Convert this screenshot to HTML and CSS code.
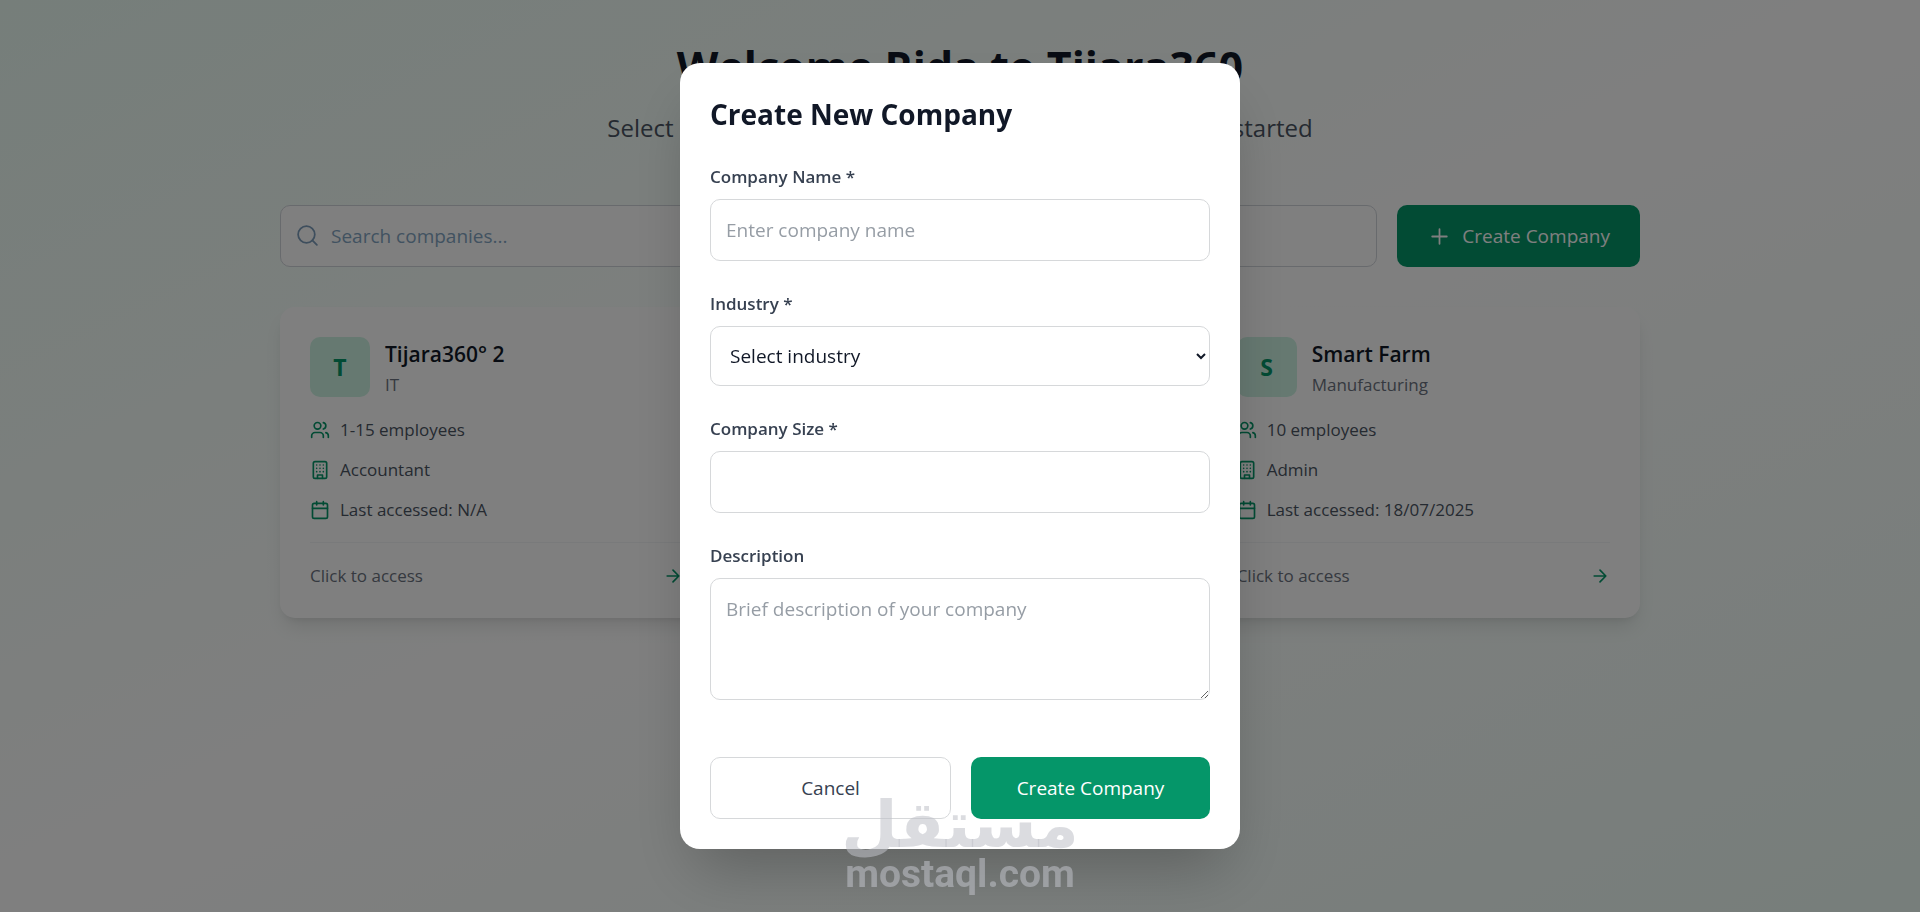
FILE: index.html
```html
<!DOCTYPE html>
<html lang="en">
<head>
<meta charset="utf-8">
<meta name="viewport" content="width=device-width, initial-scale=1">
<title>Tijara360</title>
<link rel="stylesheet" href="styles.css">
</head>
<body>
<svg class="sprite" aria-hidden="true">
  <symbol id="users" viewBox="0 0 24 24"><path d="M16 21v-2a4 4 0 0 0-4-4H6a4 4 0 0 0-4 4v2"/><circle cx="9" cy="7" r="4"/><path d="M22 21v-2a4 4 0 0 0-3-3.87"/><path d="M16 3.13a4 4 0 0 1 0 7.75"/></symbol>
  <symbol id="building" viewBox="0 0 24 24"><rect x="4" y="2" width="16" height="20" rx="2"/><path d="M9 22v-4h6v4M8 6h.01M16 6h.01M12 6h.01M12 10h.01M12 14h.01M16 10h.01M16 14h.01M8 10h.01M8 14h.01"/></symbol>
  <symbol id="calendar" viewBox="0 0 24 24"><path d="M8 2v4M16 2v4"/><rect x="3" y="4" width="18" height="18" rx="2"/><path d="M3 10h18"/></symbol>
  <symbol id="arrow" viewBox="0 0 24 24"><path d="M5 12h14M12 5l7 7-7 7"/></symbol>
  <symbol id="search" viewBox="0 0 24 24"><circle cx="11" cy="11" r="8"/><path d="m21 21-4.3-4.3"/></symbol>
  <symbol id="plus" viewBox="0 0 24 24"><path d="M5 12h14M12 5v14"/></symbol>
</svg>

<main class="page">
  <header class="intro">
    <h1 class="intro-title">Welcome Rida to Tijara360</h1>
    <p class="intro-text">Select a company to manage or create a new one to get started</p>
  </header>

  <div class="toolbar">
    <div class="search">
      <svg class="icon icon-lg search-icon" aria-hidden="true"><use href="#search"/></svg>
      <input class="field search-input" type="search" aria-label="Search companies" placeholder="Search companies...">
    </div>
    <button class="button button-primary" type="button">
      <svg class="icon icon-lg" aria-hidden="true"><use href="#plus"/></svg>Create Company
    </button>
  </div>

  <section class="companies" aria-label="Companies">
    <article class="card">
      <div class="card-head">
        <div class="avatar">T</div>
        <div>
          <h2 class="card-title">Tijara360° 2</h2>
          <p class="card-industry">IT</p>
        </div>
      </div>
      <ul class="facts">
        <li class="fact"><svg class="icon" aria-hidden="true"><use href="#users"/></svg>1-15 employees</li>
        <li class="fact"><svg class="icon" aria-hidden="true"><use href="#building"/></svg>Accountant</li>
        <li class="fact"><svg class="icon" aria-hidden="true"><use href="#calendar"/></svg>Last accessed: N/A</li>
      </ul>
      <a class="card-link" href="#company-1">Click to access<svg class="icon" aria-hidden="true"><use href="#arrow"/></svg></a>
    </article>

    <article class="card card-last">
      <div class="card-head">
        <div class="avatar">S</div>
        <div>
          <h2 class="card-title">Smart Farm</h2>
          <p class="card-industry">Manufacturing</p>
        </div>
      </div>
      <ul class="facts">
        <li class="fact"><svg class="icon" aria-hidden="true"><use href="#users"/></svg>10 employees</li>
        <li class="fact"><svg class="icon" aria-hidden="true"><use href="#building"/></svg>Admin</li>
        <li class="fact"><svg class="icon" aria-hidden="true"><use href="#calendar"/></svg>Last accessed: 18/07/2025</li>
      </ul>
      <a class="card-link" href="#company-3">Click to access<svg class="icon" aria-hidden="true"><use href="#arrow"/></svg></a>
    </article>
  </section>
</main>

<div class="overlay">
  <div class="modal" role="dialog" aria-modal="true" aria-labelledby="modal-title">
    <h2 class="modal-title" id="modal-title">Create New Company</h2>
    <form class="form">
      <div class="form-group">
        <label class="label" for="name">Company Name *</label>
        <input class="field" id="name" type="text" placeholder="Enter company name">
      </div>
      <div class="form-group">
        <label class="label" for="industry">Industry *</label>
        <select class="field" id="industry"><option>Select industry</option></select>
      </div>
      <div class="form-group">
        <label class="label" for="size">Company Size *</label>
        <input class="field" id="size" type="text">
      </div>
      <div class="form-group">
        <label class="label" for="description">Description</label>
        <textarea class="field" id="description" rows="3" placeholder="Brief description of your company"></textarea>
      </div>
      <div class="actions">
        <button class="button button-outline" type="button">Cancel</button>
        <button class="button button-primary" type="submit">Create Company</button>
      </div>
    </form>
  </div>
</div>

<div class="watermark">
  <span class="watermark-name" lang="ar" dir="rtl">مستقل</span>
  <span class="watermark-domain">mostaql.com</span>
</div>
</body>
</html>
```
FILE: styles.css
```css
*, *::before, *::after { box-sizing: border-box; }

body, h1, h2, p, ul { margin: 0; }

ul { padding: 0; list-style: none; }

body {
  min-height: 100vh;
  font-family: "Open Sans", "Noto Sans", sans-serif;
  font-size: 19px;
  line-height: 30px;
  color: #111827;
  background: linear-gradient(to bottom right, #ecfdf5, #ffffff, #eefcf6) fixed;
}

.sprite { display: none; }

.icon {
  flex: none;
  width: 20px;
  height: 20px;
  fill: none;
  stroke: #059669;
  stroke-width: 2;
  stroke-linecap: round;
  stroke-linejoin: round;
}

.icon-lg {
  width: 25px;
  height: 25px;
  stroke-width: 1.7;
}

/* Page */
.page {
  max-width: 1440px;
  margin: 0 auto;
  padding: 40px;
}

.intro {
  margin-bottom: 60px;
  text-align: center;
}

.intro-title {
  margin-bottom: 16px;
  font-size: 43px;
  font-weight: 700;
  line-height: 54px;
}

.intro-text {
  font-size: 24px;
  line-height: 35px;
  color: #4b5563;
}

.toolbar {
  display: flex;
  gap: 20px;
  margin-bottom: 40px;
}

.search {
  position: relative;
  flex: 1;
}

.search-icon {
  position: absolute;
  top: 18px;
  left: 15px;
  stroke: #7c9cba;
}

/* Controls */
.field {
  display: block;
  width: 100%;
  padding: 15px;
  border: 1px solid #d6d8da;
  border-radius: 10px;
  background: #ffffff;
  color: #111827;
  font: inherit;
}

.field::placeholder { color: #969da5; }

.search-input {
  padding-left: 50px;
  border-color: #d1d5db;
}

.search-input::placeholder { color: #83a5c2; }

.button {
  display: flex;
  align-items: center;
  justify-content: center;
  gap: 10px;
  padding: 15px 30px;
  border: 1px solid #d6d8da;
  border-radius: 10px;
  font: inherit;
  cursor: pointer;
}

.button-primary {
  padding: 16px 30px;
  border: 0;
  background: #059669;
  color: #ffffff;
}

.button-primary .icon { stroke: #ffffff; }

.button-outline {
  background: #ffffff;
  color: #374151;
}

/* Company cards */
.companies {
  display: grid;
  grid-template-columns: repeat(3, 1fr);
  gap: 30px;
}

.card {
  padding: 30px;
  border-radius: 15px;
  background: #ffffff;
  box-shadow: 0 12px 19px -4px rgba(0, 0, 0, 0.1), 0 5px 8px -5px rgba(0, 0, 0, 0.1);
}

.card-last { grid-column: 3; }

.card-head {
  display: flex;
  align-items: center;
  gap: 15px;
  margin-bottom: 20px;
}

.avatar {
  display: grid;
  place-items: center;
  width: 60px;
  height: 60px;
  border-radius: 10px;
  background: #cdf3e3;
  color: #059669;
  font-size: 23px;
  font-weight: 700;
}

.card-title {
  font-size: 21px;
  font-weight: 600;
  line-height: 35px;
}

.card-industry {
  font-size: 17px;
  line-height: 25px;
  color: #6b7280;
}

.facts {
  display: grid;
  gap: 15px;
  margin-bottom: 20px;
}

.fact {
  display: flex;
  align-items: center;
  gap: 10px;
  font-size: 17px;
  line-height: 25px;
  color: #4b5563;
}

.card-link {
  display: flex;
  align-items: center;
  justify-content: space-between;
  padding-top: 20px;
  border-top: 1px solid #f3f4f6;
  font-size: 17px;
  line-height: 25px;
  color: #6b7280;
  text-decoration: none;
}

/* Dialog */
.overlay {
  position: fixed;
  inset: 0;
  display: flex;
  align-items: center;
  justify-content: center;
  padding: 20px;
  background: rgba(0, 0, 0, 0.5);
}

.modal {
  width: 100%;
  max-width: 560px;
  padding: 30px;
  border-radius: 20px;
  background: #ffffff;
  box-shadow: 0 31px 62px -15px rgba(0, 0, 0, 0.25);
}

.modal-title {
  margin-bottom: 29px;
  font-size: 28px;
  font-weight: 700;
  line-height: 42px;
}

.form {
  display: grid;
  gap: 30px;
}

.label {
  display: block;
  margin-bottom: 10px;
  font-size: 17px;
  font-weight: 600;
  line-height: 25px;
  color: #374151;
}

.actions {
  display: flex;
  gap: 20px;
  padding-top: 27px;
}

.actions .button { flex: 1; }

/* Watermark */
.watermark {
  position: fixed;
  right: 0;
  bottom: 18px;
  left: 0;
  display: flex;
  flex-direction: column;
  align-items: center;
  color: rgba(190, 192, 200, 0.56);
  font-weight: 700;
  pointer-events: none;
}

.watermark-name {
  font-family: "DejaVu Sans", sans-serif;
  font-size: 65px;
  line-height: 60px;
}

.watermark-domain {
  font-family: Roboto, sans-serif;
  font-size: 39px;
  line-height: 39px;
}
```
